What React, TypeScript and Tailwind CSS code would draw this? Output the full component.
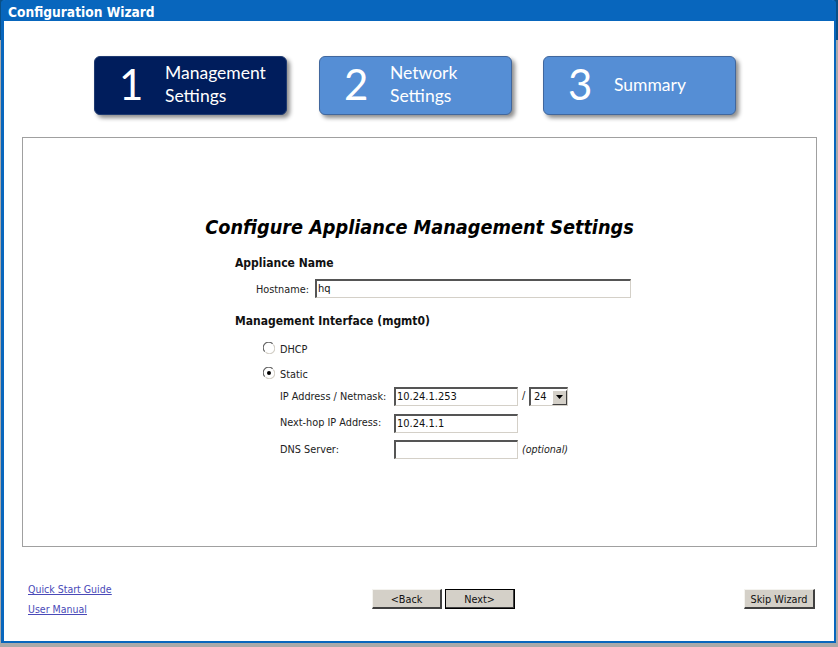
import type { ReactNode } from 'react';

const ui = "font-['DejaVu_Sans_Condensed','DejaVu_Sans',sans-serif]";
const inset = 'h-[19px] border-t-2 border-l-2 border-r border-b border-t-[#555555] border-l-[#555555] border-r-[#d4d0c8] border-b-[#d4d0c8] bg-white text-[11px] text-[#111] pl-px pb-px outline-none';

function Step({ n, lines, active }: { n: number; lines: string[]; active?: boolean }) {
  return (
    <div
      className={`flex h-[59px] w-[193px] items-center rounded-[6px] border shadow-[3px_3px_4px_rgba(0,0,0,0.45)] font-['Lato',sans-serif] text-white ${
        active ? 'border-[#1f3a70] bg-[#001d5c]' : 'border-[#41679d] bg-[#558ed5]'
      }`}
    >
      <div className="-mt-[3px] w-[70px] pl-[24px] text-[42px] leading-none">{n}</div>
      <div className="-mt-[3px] text-[17.5px] leading-[23px]">
        {lines.map((l) => (
          <div key={l}>{l}</div>
        ))}
      </div>
    </div>
  );
}

function Radio({ checked }: { checked?: boolean }) {
  return (
    <svg width="12" height="12" viewBox="0 0 12 12" className="-mt-[5px] shrink-0">
      <circle cx="6" cy="6" r="5.5" fill="#ffffff" />
      <path d="M1.8 9.6A5 5 0 0 1 9.6 1.8" fill="none" stroke="#666666" strokeWidth="1.2" />
      <path d="M2.6 10.2A5 5 0 0 0 10.2 2.6" fill="none" stroke="#d4d0c8" strokeWidth="1.2" />
      {checked && <circle cx="6" cy="6" r="2" fill="#000000" />}
    </svg>
  );
}

function Row({ label, children }: { label: string; children: ReactNode }) {
  return (
    <div className="flex h-[19px] items-center">
      <div className="w-[114px] pt-px text-[10.8px] whitespace-nowrap text-[#222]">{label}</div>
      {children}
    </div>
  );
}

function Btn({ children, isDefault, className }: { children: ReactNode; isDefault?: boolean; className: string }) {
  return (
    <button
      className={`h-[20px] border border-t-[#f4f3ef] border-l-[#f4f3ef] border-r-2 border-b-2 border-r-[#404040] border-b-[#404040] bg-[#d4d0c8] pt-[2px] text-[10.8px] text-[#111] ${
        isDefault ? 'outline outline-1 -outline-offset-1 outline-black' : ''
      } ${className}`}
    >
      {children}
    </button>
  );
}

export default function App() {
  return (
    <div className={`h-[647px] w-[838px] overflow-hidden bg-[linear-gradient(#0a4f86_0,#0a4f86_40px,#a9a9a9_40px)] pl-px ${ui}`}>
      <div className="flex h-[643px] w-[835px] flex-col rounded-t-[4px] border-r-2 border-b-2 border-l-[3px] border-[#0866bd] bg-white">
        {/* title bar */}
        <div className="-mx-[3px] -mr-[2px] h-[21px] shrink-0 rounded-t-[4px] bg-[#0866bd] pl-[7px] text-[13.65px] leading-[24px] font-bold text-white">
          Configuration Wizard
        </div>

        {/* steps */}
        <div className="mt-[35px] flex pl-[90px]">
          <Step n={1} lines={['Management', 'Settings']} active />
          <div className="w-[32px]" />
          <Step n={2} lines={['Network', 'Settings']} />
          <div className="w-[31px]" />
          <Step n={3} lines={['Summary']} />
        </div>

        {/* main panel */}
        <div className="mt-[22px] ml-[18px] flex h-[410px] w-[795px] flex-col border border-[#a0a0a0]">
          <h1 className="mt-[76px] text-center text-[19.7px] leading-[28px] font-bold text-black italic">
            Configure Appliance Management Settings
          </h1>
          <div className="pl-[212px]">
            <div className="mt-[13px] text-[12px] leading-[16px] font-bold text-[#111]">Appliance Name</div>
            <div className="mt-[8px] flex h-[19px] items-center">
              <div className="w-[59px] pt-[3px] pl-[21px] text-[10.8px] whitespace-nowrap text-[#222]">Hostname:</div>
              <input readOnly value="hq" className={`ml-[21px] w-[316px] ${inset}`} />
            </div>
            <div className="mt-[15px] text-[12px] leading-[16px] font-bold text-[#111]">Management Interface (mgmt0)</div>

            <div className="mt-[13px] flex h-[16px] items-center pl-[28px]">
              <Radio />
              <span className="ml-[5px] text-[10.8px] text-[#222]">DHCP</span>
            </div>
            <div className="mt-[9px] flex h-[16px] items-center pl-[28px]">
              <Radio checked />
              <span className="ml-[5px] text-[10.8px] text-[#222]">Static</span>
            </div>

            <div className="mt-[4px] flex flex-col gap-[7.5px] pl-[45px]">
              <Row label="IP Address / Netmask:">
                <input readOnly value="10.24.1.253" className={`w-[124px] ${inset}`} />
                <span className="ml-[4px] w-[7px] text-[11px] text-[#222]">/</span>
                <div className="flex h-[19px] w-[39px] items-center border-t-2 border-l-2 border-r border-b border-t-[#555555] border-l-[#555555] border-r-[#d4d0c8] border-b-[#d4d0c8] pl-[3px] text-[11px] text-[#111]">
                  <span className="flex-1">24</span>
                  <div className="flex h-[15px] w-[15px] items-center justify-center border border-t-white border-l-white border-r-[#404040] border-b-[#404040] bg-[#d4d0c8]">
                    <svg width="7" height="4" viewBox="0 0 7 4">
                      <path d="M0 0H7L3.5 4Z" fill="#000000" />
                    </svg>
                  </div>
                </div>
              </Row>
              <Row label="Next-hop IP Address:">
                <input readOnly value="10.24.1.1" className={`w-[124px] ${inset}`} />
              </Row>
              <Row label="DNS Server:">
                <input readOnly value="" className={`w-[124px] ${inset}`} />
                <span className="ml-[4px] pt-px text-[10.6px] text-[#222] italic">(optional)</span>
              </Row>
            </div>
          </div>
        </div>

        {/* footer */}
        <div className="flex flex-1 items-start pl-[24px]">
          <div className="mt-[35px] flex w-[344px] flex-col gap-[6px] text-[10.5px] leading-[14px] text-[#4a4ab8] underline">
            <a href="#">Quick Start Guide</a>
            <a href="#">User Manual</a>
          </div>
          <div className="mt-[42px] flex gap-[3px]">
            <Btn className="w-[70px]">&lt;Back</Btn>
            <Btn isDefault className="w-[70px]">Next&gt;</Btn>
          </div>
          <Btn className="mt-[42px] ml-[229px] w-[71px]">Skip Wizard</Btn>
        </div>
      </div>
    </div>
  );
}
